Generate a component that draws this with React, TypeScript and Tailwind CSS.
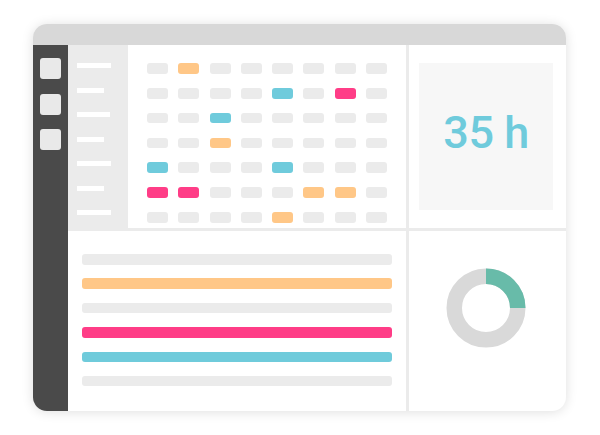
import React from 'react';

type Cell = 'g' | 'o' | 't' | 'p';

const cellColor: Record<Cell, string> = {
  g: 'bg-[#ebebeb]',
  o: 'bg-[#ffc787]',
  t: 'bg-[#6fcbdc]',
  p: 'bg-[#ff3d87]',
};

const schedule: Cell[][] = [
  ['g', 'o', 'g', 'g', 'g', 'g', 'g', 'g'],
  ['g', 'g', 'g', 'g', 't', 'g', 'p', 'g'],
  ['g', 'g', 't', 'g', 'g', 'g', 'g', 'g'],
  ['g', 'g', 'o', 'g', 'g', 'g', 'g', 'g'],
  ['t', 'g', 'g', 'g', 't', 'g', 'g', 'g'],
  ['p', 'p', 'g', 'g', 'g', 'o', 'o', 'g'],
  ['g', 'g', 'g', 'g', 'o', 'g', 'g', 'g'],
];

const menuWidths = ['w-[34px]', 'w-[27px]', 'w-[33px]', 'w-[27px]', 'w-[34px]', 'w-[27px]', 'w-[34px]'];

const bars = ['bg-[#ebebeb]', 'bg-[#ffc787]', 'bg-[#ebebeb]', 'bg-[#ff3d87]', 'bg-[#6fcbdb]', 'bg-[#ebebeb]'];

const Donut: React.FC = () => (
  <svg width="80" height="80" viewBox="0 0 80 80">
    <circle cx="40" cy="40" r="31.75" fill="none" stroke="#d9d9d9" strokeWidth="15.5" />
    <path d="M 40 8.25 A 31.75 31.75 0 0 1 71.75 40" fill="none" stroke="#68bba9" strokeWidth="15.5" />
  </svg>
);

const App: React.FC = () => {
  return (
    <div className="w-[600px] h-[435px] bg-white pt-[24px] pl-[33px]" style={{ fontFamily: 'Roboto, "Liberation Sans", sans-serif' }}>
      <div className="w-[533px] h-[387px] rounded-[14px] overflow-hidden bg-white shadow-[0_1px_12px_rgba(0,0,0,0.13)] flex flex-col">
        {/* Title bar */}
        <div className="h-[21px] bg-[#d8d8d8] shrink-0" />

        <div className="flex flex-1">
          {/* Dark sidebar */}
          <div className="w-[35px] bg-[#4a4a4a] flex flex-col items-center pt-[13px] gap-[14.5px] shrink-0">
            {[0, 1, 2].map(i => (
              <div key={i} className="w-[21px] h-[21px] rounded-[3px] bg-[#e9e9e9]" />
            ))}
          </div>

          {/* Main grid */}
          <div className="flex-1 bg-[#ebebeb] grid grid-cols-[338px_157px] grid-rows-[183px_180px] gap-[3px]">
            {/* Schedule */}
            <div className="flex">
              <div className="w-[60px] bg-[#ebebeb] flex flex-col pt-[18px] pl-[9px] gap-[19.5px]">
                {menuWidths.map((w, i) => (
                  <div key={i} className={`${w} h-[5px] bg-white`} />
                ))}
              </div>
              <div className="flex-1 bg-white flex flex-col pt-[18.3px] px-[19px] gap-[14.3px]">
                {schedule.map((row, r) => (
                  <div key={r} className="flex justify-between">
                    {row.map((c, i) => (
                      <div key={i} className={`w-[21px] h-[10.5px] rounded-[3px] ${cellColor[c]}`} />
                    ))}
                  </div>
                ))}
              </div>
            </div>

            {/* Hours */}
            <div className="bg-white pt-[18px] pl-[10px]">
              <div className="w-[134px] h-[147px] bg-[#f7f7f7] flex items-center justify-center pb-[9px]">
                <span className="text-[45px] leading-none font-medium tracking-[-0.5px] text-[#6fcbdc]">35 h</span>
              </div>
            </div>

            {/* Bars */}
            <div className="bg-white flex flex-col pt-[23px] px-[14px] gap-[13.9px]">
              {bars.map((b, i) => (
                <div key={i} className={`h-[10.5px] rounded-[3px] ${b}`} />
              ))}
            </div>

            {/* Donut */}
            <div className="bg-white pt-[37px] pl-[37px]">
              <Donut />
            </div>
          </div>
        </div>
      </div>
    </div>
  );
};

export default App;
